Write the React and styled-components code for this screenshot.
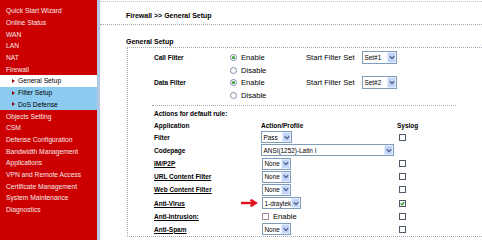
import React from 'react';
import styled, { createGlobalStyle } from 'styled-components';

const Global = createGlobalStyle`
  html, body { margin: 0; padding: 0; background: #fff; overflow: hidden; }
  body { width: 482px; height: 240px; }
`;

const Page = styled.div`
  display: flex;
  width: 482px;
  height: 240px;
  overflow: hidden;
`;

const Sidebar = styled.nav`
  width: 97px;
  flex: none;
  background: #cc0000;
  border-right: 3px solid #b3c9e3;
  padding-top: 5px;
  font-family: "Liberation Sans", Arial, sans-serif;
  font-size: 6.7px;
`;

const NavItem = styled.div`
  height: 11.7px;
  display: flex;
  align-items: center;
  gap: 3px;
  padding-left: ${p => (p.$sub ? 12 : 6)}px;
  color: ${p => (p.$sub ? '#000' : '#f7e9e9')};
  background: ${p => (p.$active ? '#fff' : p.$sub ? '#8ccbf0' : 'transparent')};
  white-space: nowrap;
`;

const Tri = styled.span`
  width: 0;
  height: 0;
  border-left: 3px solid #8a0000;
  border-top: 2px solid transparent;
  border-bottom: 2px solid transparent;
`;

const Main = styled.main`
  flex: 1;
  min-width: 0;
  margin-top: 1px;
  border-top: 1px dotted #cdc3d6;
  font-family: "Liberation Sans", Arial, sans-serif;
  font-size: 7.6px;
  color: #000;
`;

const Header = styled.div`
  height: 23px;
  box-sizing: border-box;
  padding: 5px 0 0 26px;
  display: flex;
  align-items: center;
  border-bottom: 1px dotted #a9a9a9;
  font-weight: bold;
  font-size: 7px;
`;

const Title = styled.div`
  padding: 12px 0 0 26px;
  line-height: 10px;
  height: 10px;
  font-weight: bold;
  font-size: 7px;
`;

const Box = styled.section`
  margin-left: 27px;
  width: 380px;
  border: 1px dotted #a5a5b5;
  border-right: none;
  padding-top: 3px;
`;

const FilterGrid = styled.div`
  display: grid;
  grid-template-columns: 76px 76px 56px auto;
  grid-auto-rows: 12.7px;
  padding-left: 26px;
  align-items: center;
`;

const Label = styled.span`
  font-weight: bold;
  font-size: 6.5px;
  text-decoration: ${p => (p.$link ? 'underline' : 'none')};
  white-space: nowrap;
  grid-column: ${p => p.$col || 'auto'};
`;

const Option = styled.label`
  display: flex;
  align-items: center;
  gap: 4px;
  grid-column: 2;
`;

const Radio = styled.span`
  width: 7px;
  height: 7px;
  box-sizing: border-box;
  border-radius: 50%;
  border: 1px solid #7a8aa3;
  background: #fff;
  display: flex;
  align-items: center;
  justify-content: center;
  &::after {
    content: '';
    width: 3px;
    height: 3px;
    border-radius: 50%;
    background: ${p => (p.$on ? '#2f9a2f' : 'transparent')};
  }
`;

const Select = styled.span`
  display: inline-flex;
  width: ${p => p.$w}px;
  height: ${p => p.$h || 12}px;
  box-sizing: border-box;
  border: 1px solid #7f9db9;
  background: #fff;
  font-size: 6.4px;
`;

const SelText = styled.span`
  flex: 1;
  min-width: 0;
  padding-left: 1.5px;
  display: flex;
  align-items: center;
  overflow: hidden;
  white-space: nowrap;
`;

const SelBtn = styled.span`
  width: 9px;
  flex: none;
  background: #c3d4fb;
  border: 1px solid #e6edfd;
  box-sizing: border-box;
  display: flex;
  align-items: center;
  justify-content: center;
`;

const Separator = styled.div`
  margin: 3px 0 0 24px;
  width: 304px;
  border-top: 1px dotted #a9a9b4;
`;

const ActionGrid = styled.div`
  display: grid;
  grid-template-columns: 107px 136px auto;
  grid-template-rows: 11px 11.5px;
  grid-auto-rows: 13.15px;
  padding: 2.5px 0 0 26px;
  align-items: center;
`;

const FullRow = styled.div`
  grid-column: 1 / -1;
`;

const Cell = styled.div`
  position: relative;
  display: flex;
  align-items: center;
  gap: 4px;
  padding-left: ${p => p.$pad || 0}px;
`;

const Check = styled.span`
  width: 7px;
  height: 7px;
  box-sizing: border-box;
  border: 1px solid ${p => (p.$faint ? '#a78a9a' : '#4e5a68')};
  background: #fff;
  display: flex;
  align-items: center;
  justify-content: center;
`;

const Arrow = styled.svg`
  position: absolute;
  left: -20px;
  top: 50%;
  margin-top: -4px;
`;

const Chevron = () => (
  <svg width="6" height="5" viewBox="0 0 6 5">
    <path d="M0.8 1.2 L3 3.6 L5.2 1.2" fill="none" stroke="#4d6185" strokeWidth="1.3" />
  </svg>
);

const Dropdown = ({ w, h, children }) => (
  <Select $w={w} $h={h}>
    <SelText>{children}</SelText>
    <SelBtn>
      <Chevron />
    </SelBtn>
  </Select>
);

const CheckBox = ({ on, faint }) => (
  <Check $faint={faint}>
    {on && (
      <svg width="5" height="5" viewBox="0 0 5 5">
        <path d="M0.6 2.4 L2 3.8 L4.4 1" fill="none" stroke="#2a9a2a" strokeWidth="1.3" />
      </svg>
    )}
  </Check>
);

const nav = [
  'Quick Start Wizard', 'Online Status', 'WAN', 'LAN', 'NAT', 'Firewall',
];
const nav2 = [
  'Objects Setting', 'CSM', 'Defense Configuration', 'Bandwidth Management', 'Applications',
  'VPN and Remote Access', 'Certificate Management', 'System Maintenance', 'Diagnostics',
];

const rows = [
  { name: 'IM/P2P', sel: 'None', w: 29 },
  { name: 'URL Content Filter', sel: 'None', w: 29 },
  { name: 'Web Content Filter', sel: 'None', w: 29 },
  { name: 'Anti-Virus', sel: '1-draytek', w: 39, arrow: true, on: true },
  { name: 'Anti-Intrusion:', enable: true },
  { name: 'Anti-Spam', sel: 'None', w: 29 },
];

export default function App() {
  return (
    <Page>
      <Global />
      <Sidebar>
        {nav.map(n => <NavItem key={n}>{n}</NavItem>)}
        <NavItem $sub $active><Tri />General Setup</NavItem>
        <NavItem $sub><Tri />Filter Setup</NavItem>
        <NavItem $sub><Tri />DoS Defense</NavItem>
        {nav2.map(n => <NavItem key={n}>{n}</NavItem>)}
      </Sidebar>
      <Main>
        <Header>Firewall &gt;&gt; General Setup</Header>
        <Title>General Setup</Title>
        <Box>
          <FilterGrid>
            <Label $col={1}>Call Filter</Label>
            <Option><Radio $on />Enable</Option>
            <span>Start Filter Set</span>
            <Dropdown w={35} h={13}>Set#1</Dropdown>
            <Option><Radio />Disable</Option>
            <Label $col={1}>Data Filter</Label>
            <Option><Radio $on />Enable</Option>
            <span>Start Filter Set</span>
            <Dropdown w={35} h={13}>Set#2</Dropdown>
            <Option><Radio />Disable</Option>
          </FilterGrid>
          <Separator />
          <ActionGrid>
            <FullRow><Label>Actions for default rule:</Label></FullRow>
            <Label>Application</Label>
            <Label>Action/Profile</Label>
            <Label>Syslog</Label>
            <Label>Filter</Label>
            <Cell><Dropdown w={31}>Pass</Dropdown></Cell>
            <Cell $pad={2}><CheckBox /></Cell>
            <Label>Codepage</Label>
            <Cell><Dropdown w={133}>ANSI(1252)-Latin I</Dropdown></Cell>
            <Cell />
            {rows.map(r => (
              <React.Fragment key={r.name}>
                <Label $link>{r.name}</Label>
                <Cell $pad={1}>
                  {r.arrow && (
                    <Arrow width="17" height="8" viewBox="0 0 17 8">
                      <path d="M0 4 H14" stroke="#e3101c" strokeWidth="2.4" />
                      <path d="M9.5 0.8 L14.8 4 L9.5 7.2" fill="none" stroke="#e3101c" strokeWidth="2.4" />
                    </Arrow>
                  )}
                  {r.enable ? (
                    <>
                      <CheckBox faint />
                      <span>Enable</span>
                    </>
                  ) : (
                    <Dropdown w={r.w}>{r.sel}</Dropdown>
                  )}
                </Cell>
                <Cell $pad={2}><CheckBox on={r.on} /></Cell>
              </React.Fragment>
            ))}
          </ActionGrid>
        </Box>
      </Main>
    </Page>
  );
}
